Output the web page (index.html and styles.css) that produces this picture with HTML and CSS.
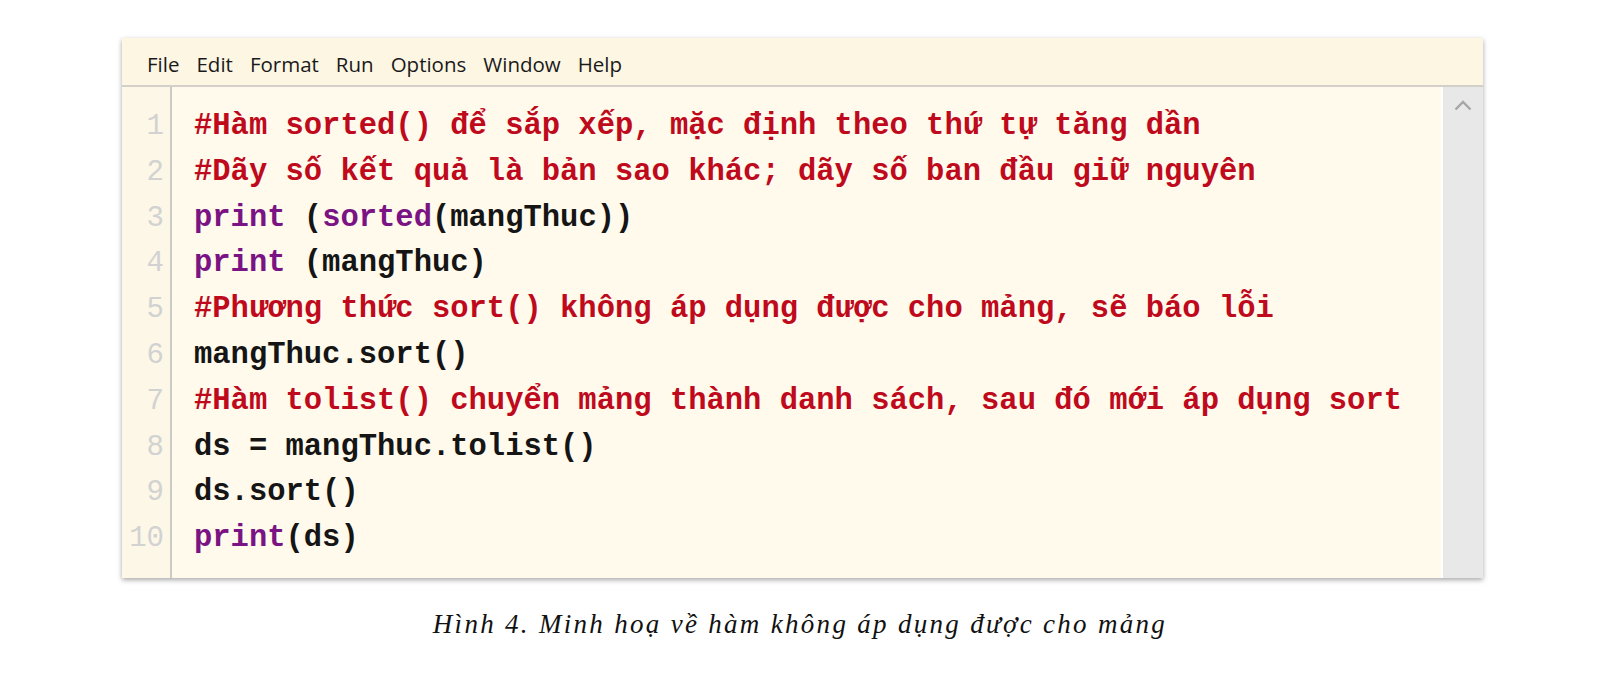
FILE: index.html
```html
<!DOCTYPE html>
<html lang="vi">
<head>
    <meta charset="UTF-8">
    <title>Hình 4</title>
    <link rel="stylesheet" href="styles.css">
</head>
<body>
    <div class="figure">
        <div class="window">
            <div class="menu-bar">
                <span class="menu-item">File</span>
                <span class="menu-item">Edit</span>
                <span class="menu-item">Format</span>
                <span class="menu-item">Run</span>
                <span class="menu-item">Options</span>
                <span class="menu-item">Window</span>
                <span class="menu-item">Help</span>
            </div>
            <div class="editor">
                <div class="gutter">
                    <div>1</div><div>2</div><div>3</div><div>4</div><div>5</div>
                    <div>6</div><div>7</div><div>8</div><div>9</div><div>10</div>
                </div>
                <div class="code">
                    <div class="line cm">#Hàm sorted() để sắp xếp, mặc định theo thứ tự tăng dần</div>
                    <div class="line cm">#Dãy số kết quả là bản sao khác; dãy số ban đầu giữ nguyên</div>
                    <div class="line"><span class="kw">print</span> (<span class="kw">sorted</span>(mangThuc))</div>
                    <div class="line"><span class="kw">print</span> (mangThuc)</div>
                    <div class="line cm">#Phương thức sort() không áp dụng được cho mảng, sẽ báo lỗi</div>
                    <div class="line">mangThuc.sort()</div>
                    <div class="line cm">#Hàm tolist() chuyển mảng thành danh sách, sau đó mới áp dụng sort</div>
                    <div class="line">ds = mangThuc.tolist()</div>
                    <div class="line">ds.sort()</div>
                    <div class="line"><span class="kw">print</span>(ds)</div>
                </div>
                <div class="scrollbar">
                    <svg class="scroll-up" width="18" height="11" viewBox="0 0 18 11">
                        <path d="M1.5 9.5 L9 2 L16.5 9.5" fill="none" stroke="#a6a6a6" stroke-width="2.4"/>
                    </svg>
                </div>
            </div>
        </div>
        <p class="caption">Hình 4. Minh hoạ về hàm không áp dụng được cho mảng</p>
    </div>
</body>
</html>
```

FILE: styles.css
```css
body {
    margin: 0;
    background: #ffffff;
}

.figure {
    padding-top: 38px;
}

/* Editor window */
.window {
    width: 1361px;
    margin-left: 122px;
    background: #fffaec;
    box-shadow: 0 2px 5px rgba(0, 0, 0, 0.35);
}

.menu-bar {
    display: flex;
    align-items: center;
    gap: 17px;
    height: 49px;
    padding: 5px 0 0 25px;
    box-sizing: border-box;
    background: #fdf6e3;
    border-bottom: 2px solid #d2d0c8;
    font-family: "Open Sans", sans-serif;
    font-size: 20.5px;
    color: #1a1a1a;
}

.editor {
    display: flex;
    height: 491px;
}

.gutter {
    width: 50px;
    padding: 17px 6px 0 0;
    box-sizing: border-box;
    border-right: 2px solid #cbcbc6;
    background: #fdf7e7;
    text-align: right;
    font-family: "Liberation Mono", "Courier New", monospace;
    font-size: 29px;
    line-height: 45.8px;
    color: #d2d2d2;
}

.code {
    flex: 1;
    padding: 17px 0 0 22px;
    font-family: "Liberation Mono", "Courier New", monospace;
    font-weight: bold;
    font-size: 30.5px;
    line-height: 45.8px;
    color: #151515;
}

.line {
    white-space: pre;
}

.cm {
    color: #be0a1c;
}

.kw {
    color: #7a1383;
}

.scrollbar {
    width: 42px;
    border-left: 2px solid #ffffff;
    background: #e8e8e8;
    display: flex;
    justify-content: center;
    align-items: flex-start;
    padding-top: 13px;
    box-sizing: border-box;
}

.scroll-up {
    display: block;
}

/* Caption */
.caption {
    margin: 30px 0 0;
    text-align: center;
    font-family: "Liberation Serif", "Times New Roman", serif;
    font-style: italic;
    font-size: 27px;
    line-height: 32px;
    letter-spacing: 2.3px;
    color: #111111;
}
```
